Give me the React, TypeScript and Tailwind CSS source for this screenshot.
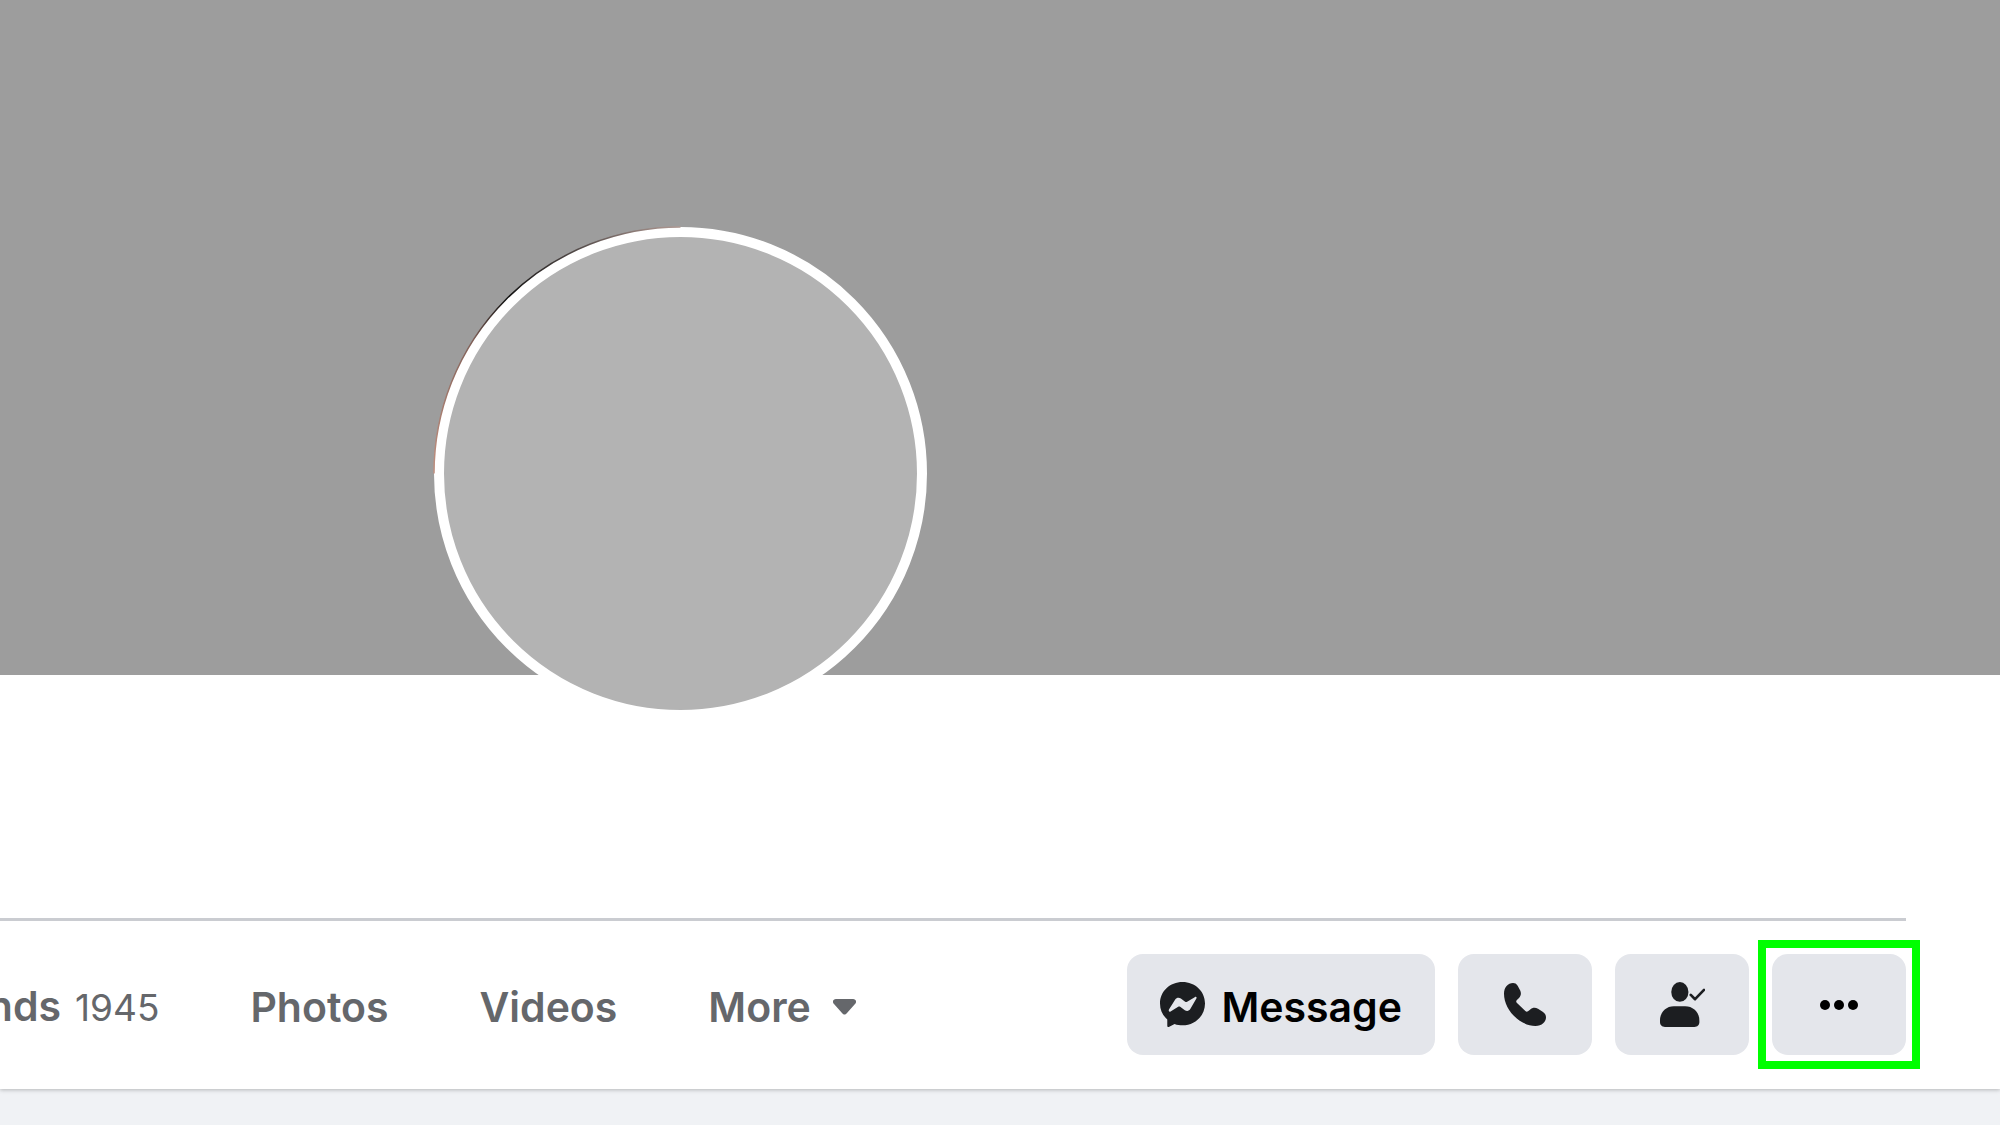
import React from "react";

const tabs = [
  { label: "Friends", count: 1945 },
  { label: "Photos" },
  { label: "Videos" },
];

const MessengerIcon = () => (
  <svg className="h-[45px] w-[45px] shrink-0" viewBox="0 0 136 136" aria-hidden="true">
    <path
      d="M68 0C30 0 0 28 0 65c0 20 8 36 22 48v19c0 4 3 5 6 3l16-8c8 3 16 4 24 4 38 0 68-29 68-66S106 0 68 0Z"
      fill="#1c1e21"
    />
    <path
      d="M27 83 46 53c4-6 11-7 17-3l13 10c2 1 4 1 6 0l23-14c4-3 7 0 5 4L92 81c-4 7-11 8-17 4L61 75c-2-1-4-1-6 0L32 89c-4 2-7-1-5-6Z"
      fill="#e4e6eb"
    />
  </svg>
);

const PhoneIcon = () => (
  <svg className="h-[43px] w-[42px]" viewBox="0 0 126 129" aria-hidden="true">
    <path
      d="M27 0C12 0 0 13 0 32c0 48 48 97 94 97 20 0 32-12 32-26 0-7-3-12-10-17l-14-9c-9-4-17-3-24 3l-6 5c-3 2-5 2-8-1L39 60c-3-3-3-5-1-8l7-7c6-7 7-14 4-22L41 8C37 2 33 0 27 0Z"
      fill="#1c1e21"
    />
  </svg>
);

const FriendIcon = () => (
  <svg className="h-[45px] w-[45px]" viewBox="0 0 136 136" aria-hidden="true">
    <ellipse cx="60" cy="30" rx="26" ry="30" fill="#1c1e21" />
    <path
      d="M42 73h34c24 0 43 18 43 43v5c0 9-6 15-15 15H15c-9 0-15-6-15-15v-5c0-25 18-43 42-43Z"
      fill="#1c1e21"
    />
    <path
      d="m93 39 13 13 27-28"
      fill="none"
      stroke="#1c1e21"
      strokeWidth="8"
      strokeLinecap="round"
      strokeLinejoin="round"
    />
  </svg>
);

const MoreIcon = () => (
  <svg className="h-[10px] w-[38px]" viewBox="0 0 38 10" aria-hidden="true">
    <circle cx="5" cy="5" r="5" />
    <circle cx="19" cy="5" r="5" />
    <circle cx="33" cy="5" r="5" />
  </svg>
);

const buttonClass =
  "flex h-[101px] items-center justify-center rounded-2xl bg-[#e4e6eb] text-black";

const Avatar = () => (
  <div className="absolute -bottom-[45px] left-[434px] h-[493px] w-[493px] rounded-full border-10 border-white bg-[#b3b3b3]">
    {/* thin edge around the upper left of the ring */}
    <svg className="absolute -inset-[11px] h-[495px] w-[495px]" viewBox="0 0 495 495" aria-hidden="true">
      <defs>
        <linearGradient id="edge" x1="0" y1="1" x2="1" y2="0">
          <stop offset="0" stopColor="#c09080" />
          <stop offset="0.35" stopColor="#806058" />
          <stop offset="0.5" stopColor="#111111" />
          <stop offset="0.75" stopColor="#554c4a" />
          <stop offset="1" stopColor="#b09a94" />
        </linearGradient>
      </defs>
      <path d="M1 247.5A246.5 246.5 0 0 1 247.5 1" fill="none" stroke="url(#edge)" strokeWidth="1.5" />
    </svg>
  </div>
);

export default function App() {
  return (
    <div className="min-h-screen overflow-x-hidden bg-[#f0f2f5] font-['Inter',sans-serif]">
      <main className="bg-white shadow-[0_1px_4px_rgba(0,0,0,0.25)]">
        <div className="relative h-[675px] bg-[#9d9d9d]">
          <Avatar />
        </div>

        <div className="mr-[94px] pt-[243px]">
          <div className="h-[3px] bg-[#caccd1]"></div>
          <div className="flex items-center justify-between pt-[33px] pb-[34px]">
            <nav className="-ml-[87px] flex items-center gap-[91px] pt-1 text-[41px] leading-[48px] font-semibold text-[#65676b]">
              {tabs.map((tab) => (
                <a href="#" key={tab.label} className="flex items-baseline gap-3.5">
                  {tab.label}
                  {tab.count && <span className="text-[37px] font-normal">{tab.count}</span>}
                </a>
              ))}
              <button className="flex items-center gap-[22px]">
                More
                <svg className="h-[16px] w-[23px]" viewBox="0 0 23 16" aria-hidden="true">
                  <path
                    d="M3 0h17c3 0 4 3 2 5l-8 9c-2 2-3 2-5 0L1 5C-1 3 0 0 3 0Z"
                    fill="currentColor"
                  />
                </svg>
              </button>
            </nav>

            <div className="flex items-center gap-[23px]">
              <button className={`${buttonClass} gap-4 px-[33px] text-[41px] leading-[48px] font-semibold`}>
                <MessengerIcon />
                <span className="pt-1">Message</span>
              </button>
              <button className={`${buttonClass} w-[134px]`} aria-label="Call">
                <PhoneIcon />
              </button>
              <button className={`${buttonClass} w-[134px]`} aria-label="Friends">
                <FriendIcon />
              </button>
              <div className="relative">
                <button className={`${buttonClass} w-[134px]`} aria-label="More options">
                  <MoreIcon />
                </button>
                <div className="pointer-events-none absolute -inset-3.5 border-8 border-[#00ff00]"></div>
              </div>
            </div>
          </div>
        </div>
      </main>
    </div>
  );
}
